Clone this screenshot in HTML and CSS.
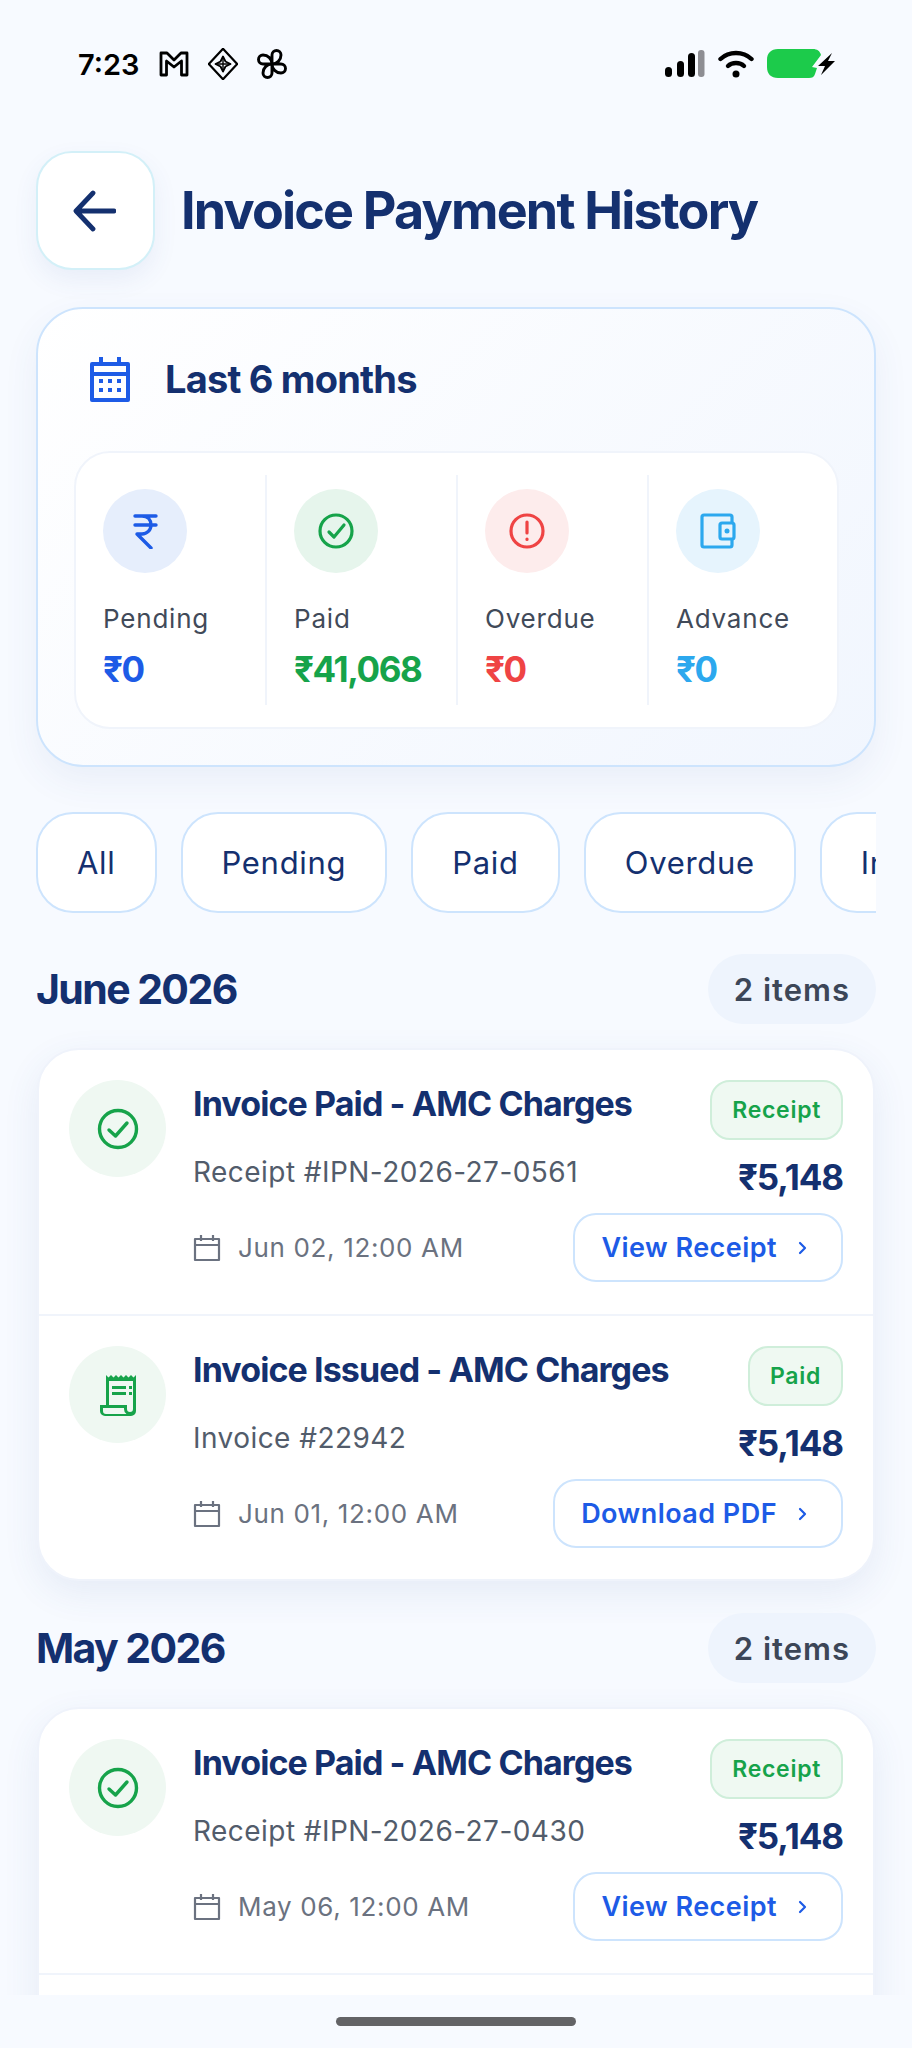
FILE: index.html
```html
<!DOCTYPE html>
<html lang="en">
<head>
<meta charset="utf-8">
<title>Invoice Payment History</title>
<link rel="stylesheet" href="styles.css">
</head>
<body>
<div class="page">
  <div class="scroll">
    <div class="status">
      <div class="status-left">
        <span class="time">7:23</span>
        <svg class="si" viewBox="0 0 30 32" fill="none" stroke="#000" stroke-width="2.800" stroke-linejoin="round"><path d="M2 5h6l7 7 7-7h6v22h-5.500V13L15 19l-7.500-6v14H2z"/></svg>
        <svg class="si" viewBox="0 0 30 32" fill="none" stroke="#000" stroke-width="2.200" stroke-linejoin="round"><path d="M15 .8 29.200 16 15 31.200 .8 16z"/><path d="M15 8.500l2.500 5 5 2.500-5 2.500-2.500 5-2.500-5-5-2.500 5-2.500z" stroke-width="1.800"/><path d="M15 8.500v15M7.500 16h15" stroke-width="1.400"/></svg>
        <svg class="si" viewBox="0 0 30 32" fill="none" stroke="#000" stroke-width="2.900" stroke-linejoin="round"><path d="M15 16V7a4.500 4.500 0 0 1 9 0c0 5-4 9-9 9ZM15 16h9a4.500 4.500 0 0 1 0 9c-5 0-9-4-9-9ZM15 16v9a4.500 4.500 0 0 1-9 0c0-5 4-9 9-9ZM15 16H6a4.500 4.500 0 0 1 0-9c5 0 9 4 9 9Z"/></svg>
      </div>
      <div class="status-right">
        <svg class="signal" viewBox="0 0 40 28"><rect x="0" y="17" width="7" height="10" rx="3.500" fill="#000"/><rect x="12" y="11" width="7" height="16" rx="3.500" fill="#000"/><rect x="23" y="3" width="7" height="24" rx="3.500" fill="#000"/><rect x="33" y="0" width="6.500" height="27" rx="3" fill="#8e8e93"/></svg>
        <svg class="wifi" viewBox="0 0 36 28" fill="none" stroke="#000" stroke-width="4.400" stroke-linecap="round"><path d="M2.500 9C11 1 25 1 33.500 9"/><path d="M10 16C14 12 22 12 26 16"/><circle cx="18" cy="24" r="3.500" fill="#000" stroke="none"/></svg>
        <svg class="batt" viewBox="0 0 68 30"><path d="M11 0h35c4 0 7 2 8 6L45 18l5 1-2 6c-1 3-3 4-6 4H11C4 29 0 25 0 18V11C0 4 4 0 11 0Z" fill="#1ccb4b"/><path d="M65 4 51 17h7l-4 9 14-14h-7l4-8Z" fill="#000"/></svg>
      </div>
    </div>

    <main class="content">
      <header class="header">
        <button class="back" type="button" aria-label="Back">
          <svg viewBox="0 0 44 44" fill="none" stroke="#14306f" stroke-width="4.800" stroke-linecap="round" stroke-linejoin="round"><path d="M21 4 4 22l17 18M5 22h37"/></svg>
        </button>
        <h1 class="title">Invoice Payment History</h1>
      </header>

      <section class="summary">
        <div class="range">
          <svg class="range-icon" viewBox="0 0 44 46"><path fill="none" stroke="#1d5be6" stroke-width="4" stroke-linejoin="round" d="M4 8h36v36H4zM4 18h36"/><path fill="#1d5be6" d="M11 1h4v9h-4zM29 1h4v9h-4zM11 23h4v4h-4zM20 23h4v4h-4zM29 23h4v4h-4zM11 32h4v4h-4zM20 32h4v4h-4zM29 32h4v4h-4z"/></svg>
          <span class="range-label">Last 6 months</span>
        </div>
        <div class="stats">
          <div class="stat">
            <div class="disc disc-blue"><svg viewBox="0 0 32 36" fill="none" stroke="#1d5be6" stroke-width="3.400" stroke-linecap="round" stroke-linejoin="round"><path d="M6 3h21M6 12h21M13 3c6 0 9 4 9 9s-4 9-9 9H8l14 14"/></svg></div>
            <div class="stat-label">Pending</div>
            <div class="stat-value v-blue">₹0</div>
          </div>
          <div class="stat">
            <div class="disc disc-green"><svg viewBox="0 0 36 36" fill="none" stroke="#16a34a" stroke-width="3.200" stroke-linecap="round" stroke-linejoin="round"><circle cx="18" cy="18" r="16"/><path d="m11 19 5 5 10-12"/></svg></div>
            <div class="stat-label">Paid</div>
            <div class="stat-value v-green">₹41,068</div>
          </div>
          <div class="stat">
            <div class="disc disc-red"><svg viewBox="0 0 36 36" fill="none" stroke="#ef4444" stroke-width="3.200" stroke-linecap="round"><circle cx="18" cy="18" r="16"/><path d="M18 9v11M18 26v.5"/></svg></div>
            <div class="stat-label">Overdue</div>
            <div class="stat-value v-red">₹0</div>
          </div>
          <div class="stat">
            <div class="disc disc-sky"><svg viewBox="0 0 36 36" fill="none" stroke="#2ca8ee" stroke-width="3.200" stroke-linejoin="round"><path d="M32 11V4a2 2 0 0 0-2-2H4a2 2 0 0 0-2 2v28a2 2 0 0 0 2 2h26a2 2 0 0 0 2-2v-7"/><rect x="20" y="10" width="14" height="16" rx="2"/><circle cx="27" cy="18" r="2.500" fill="#2ca8ee" stroke="none"/></svg></div>
            <div class="stat-label">Advance</div>
            <div class="stat-value v-sky">₹0</div>
          </div>
        </div>
      </section>

      <nav class="filters">
        <span class="chip">All</span>
        <span class="chip">Pending</span>
        <span class="chip">Paid</span>
        <span class="chip">Overdue</span>
        <span class="chip">Invoices</span>
      </nav>

      <section class="month">
        <div class="month-head"><h2 class="month-name">June 2026</h2><span class="count">2 items</span></div>
        <div class="card">
          <article class="row">
            <div class="row-disc"><svg class="ic-check" viewBox="0 0 42 42" fill="none" stroke="#16a34a" stroke-width="3.400" stroke-linecap="round" stroke-linejoin="round"><circle cx="21" cy="21" r="18.500"/><path d="m12 22 6.500 6L30 15"/></svg></div>
            <div class="row-main">
              <div class="line line-top"><h3 class="row-title">Invoice Paid - AMC Charges</h3><span class="badge">Receipt</span></div>
              <div class="line line-mid"><p class="row-sub">Receipt #IPN-2026-27-0561</p><span class="amount">₹5,148</span></div>
              <div class="line line-bot">
                <div class="row-date"><svg viewBox="0 0 28 28" fill="none" stroke="#6b7280" stroke-width="2.200" stroke-linejoin="round"><path d="M2 5h24v21H2zM2 11h24M8 1v6M20 1v6"/></svg><span>Jun 02, 12:00 AM</span></div>
                <button class="action" type="button">View Receipt<svg viewBox="0 0 12 16" fill="none" stroke="#1d5be6" stroke-width="2.200" stroke-linecap="round" stroke-linejoin="round"><path d="m4 3 5 5-5 5"/></svg></button>
              </div>
            </div>
          </article>
          <article class="row">
            <div class="row-disc"><svg class="ic-receipt" viewBox="0 0 38 42" fill="#16a34a"><path d="M7 1l2.500 2.500L12 1l2.500 2.500L17 1l2.500 2.500L22 1l2.500 2.500L27 1l2.500 2.500L32 1l2.500 2.500L37 1v36a5 5 0 0 1-5 5H6a5 5 0 0 1-5-5v-6h6zm3 6v24h18v4a3 3 0 0 0 3 3 3 3 0 0 0 3-3V7zM4 34v3a3 3 0 0 0 3 3h20.500a6 6 0 0 1-2.500-5v-1zM13 12h14v3H13zM30 12h3v3h-3zM13 18h14v3H13zM30 18h3v3h-3z" fill-rule="evenodd"/></svg></div>
            <div class="row-main">
              <div class="line line-top"><h3 class="row-title">Invoice Issued - AMC Charges</h3><span class="badge">Paid</span></div>
              <div class="line line-mid"><p class="row-sub">Invoice #22942</p><span class="amount">₹5,148</span></div>
              <div class="line line-bot">
                <div class="row-date"><svg viewBox="0 0 28 28" fill="none" stroke="#6b7280" stroke-width="2.200" stroke-linejoin="round"><path d="M2 5h24v21H2zM2 11h24M8 1v6M20 1v6"/></svg><span>Jun 01, 12:00 AM</span></div>
                <button class="action" type="button">Download PDF<svg viewBox="0 0 12 16" fill="none" stroke="#1d5be6" stroke-width="2.200" stroke-linecap="round" stroke-linejoin="round"><path d="m4 3 5 5-5 5"/></svg></button>
              </div>
            </div>
          </article>
        </div>
      </section>

      <section class="month">
        <div class="month-head"><h2 class="month-name">May 2026</h2><span class="count">2 items</span></div>
        <div class="card">
          <article class="row">
            <div class="row-disc"><svg class="ic-check" viewBox="0 0 42 42" fill="none" stroke="#16a34a" stroke-width="3.400" stroke-linecap="round" stroke-linejoin="round"><circle cx="21" cy="21" r="18.500"/><path d="m12 22 6.500 6L30 15"/></svg></div>
            <div class="row-main">
              <div class="line line-top"><h3 class="row-title">Invoice Paid - AMC Charges</h3><span class="badge">Receipt</span></div>
              <div class="line line-mid"><p class="row-sub">Receipt #IPN-2026-27-0430</p><span class="amount">₹5,148</span></div>
              <div class="line line-bot">
                <div class="row-date"><svg viewBox="0 0 28 28" fill="none" stroke="#6b7280" stroke-width="2.200" stroke-linejoin="round"><path d="M2 5h24v21H2zM2 11h24M8 1v6M20 1v6"/></svg><span>May 06, 12:00 AM</span></div>
                <button class="action" type="button">View Receipt<svg viewBox="0 0 12 16" fill="none" stroke="#1d5be6" stroke-width="2.200" stroke-linecap="round" stroke-linejoin="round"><path d="m4 3 5 5-5 5"/></svg></button>
              </div>
            </div>
          </article>
          <article class="row"></article>
        </div>
      </section>
    </main>
  </div>
  <footer class="home"><span class="home-bar"></span></footer>
</div>
</body>
</html>
```
FILE: styles.css
```css
* { box-sizing: border-box; }
html, body { margin: 0; padding: 0; }
body {
  background: #f7faff;
  font-family: Inter, "Noto Sans", sans-serif;
  color: #14306f;
}
.page {
  width: 912px;
  height: 2048px;
  display: flex;
  flex-direction: column;
  overflow: hidden;
  background: #f7faff;
}
.scroll { flex: 1; min-height: 0; overflow: hidden; }
.status {
  height: 151px;
  padding: 48px 77px 71px 78px;
  display: flex;
  justify-content: space-between;
  align-items: center;
}
.status-left, .status-right { display: flex; align-items: center; }
.time { font-size: 29px; font-weight: 600; color: #000; margin-right: 19px; }
.si { width: 30px; height: 32px; margin-right: 19px; }
.signal { width: 40px; height: 28px; margin-right: 13px; }
.wifi { width: 36px; height: 28px; margin-right: 13px; }
.batt { width: 68px; height: 30px; }

.content { padding: 0 36px; }
.header { display: flex; align-items: center; gap: 26px; height: 119px; }
.back {
  width: 119px;
  height: 119px;
  padding: 0;
  border: 2px solid #d3f0f8;
  border-radius: 36px;
  background: #fff;
  box-shadow: 0 10px 24px rgba(60, 90, 160, .08);
  display: flex;
  align-items: center;
  justify-content: center;
}
.back svg { width: 44px; height: 44px; margin-right: 4px; }
.title { margin: 0; font-size: 52px; font-weight: 700; letter-spacing: -1.8px; color: #14306f; }

.summary {
  margin-top: 37px;
  height: 460px;
  padding: 34px 37px 37px;
  border: 2px solid #cde4fd;
  border-radius: 47px;
  background: linear-gradient(135deg, #ffffff 0%, #f1f6fe 100%);
  box-shadow: 0 14px 36px rgba(60, 90, 160, .07);
}
.range { display: flex; align-items: center; height: 72px; padding-left: 13px; gap: 33px; margin-bottom: 36px; }
.range-icon { width: 44px; height: 46px; }
.range-label { font-size: 38px; font-weight: 700; letter-spacing: -.8px; color: #14306f; }
.stats {
  display: grid;
  grid-template-columns: 191px 191px 191px 1fr;
  height: 278px;
  padding: 22px 0;
  margin: 0 -2px 0 -1px;
  border: 2px solid #f0f4fb;
  border-radius: 36px;
  background: #fff;
}
.stat { padding: 14px 0 0 27px; border-right: 2px solid #f0f4fb; }
.stat:last-child { border-right: 0; }
.disc {
  width: 84px;
  height: 84px;
  border-radius: 50%;
  display: flex;
  align-items: center;
  justify-content: center;
}
.disc svg { width: 36px; height: 36px; }
.disc-blue { background: #e6eefc; }
.disc-green { background: #e6f5ec; }
.disc-red { background: #fdecec; }
.disc-sky { background: #e6f4fd; }
.stat-label { margin-top: 29px; font-size: 26px; line-height: 34px; letter-spacing: .8px; color: #414a59; }
.stat-value { margin-top: 13px; font-size: 35px; line-height: 40px; font-weight: 700; letter-spacing: -1.4px; }
.v-blue { color: #1d5be6; }
.v-green { color: #16a34a; }
.v-red { color: #ef4444; }
.v-sky { color: #2ca8ee; }

.filters { display: flex; gap: 24px; margin-top: 45px; overflow: hidden; }
.chip {
  flex-shrink: 0;
  height: 101px;
  padding: 0 39px;
  border: 2px solid #cde4fd;
  border-radius: 37px;
  background: #fff;
  display: flex;
  align-items: center;
  font-size: 31px;
  letter-spacing: .7px;
  color: #14306f;
}

.month { margin-top: 32px; }
.filters + .month { margin-top: 41px; }
.month-head { display: flex; justify-content: space-between; align-items: center; height: 70px; margin-bottom: 24px; }
.month-name { margin: 0; font-size: 41px; font-weight: 700; letter-spacing: -1.6px; color: #14306f; }
.count {
  height: 70px;
  padding: 0 26px;
  border-radius: 35px;
  background: #eef4fd;
  display: flex;
  align-items: center;
  font-size: 31px;
  font-weight: 600;
  letter-spacing: 1px;
  color: #3c4657;
}
.card {
  margin: 0 1px;
  border: 2px solid #eff3fb;
  border-radius: 42px;
  background: #fff;
  box-shadow: 0 12px 36px rgba(60, 90, 160, .09);
}
.row {
  height: 266px;
  padding: 30px 30px 0;
  display: flex;
  gap: 27px;
  border-bottom: 2px solid #f0f4fb;
}
.row:last-child { border-bottom: 0; height: 263px; }
.row-disc {
  flex-shrink: 0;
  width: 97px;
  height: 97px;
  border-radius: 50%;
  background: #eff8f2;
  display: flex;
  align-items: center;
  justify-content: center;
}
.ic-check { width: 42px; height: 42px; }
.ic-receipt { width: 38px; height: 42px; }
.row-main { flex: 1; min-width: 0; }
.line { display: flex; justify-content: space-between; }
.line-top { height: 60px; }
.line-mid { height: 44px; margin-top: 15px; }
.line-bot { height: 69px; margin-top: 14px; align-items: center; }
.row-title { margin: 0; font-size: 34px; line-height: 48px; font-weight: 700; letter-spacing: -.9px; color: #14306f; white-space: nowrap; }
.row-sub { margin: 0; font-size: 28px; line-height: 34px; letter-spacing: .45px; color: #525c6b; white-space: nowrap; }
.row-date { display: flex; align-items: center; gap: 17px; font-size: 26px; letter-spacing: .65px; color: #6b7280; white-space: nowrap; }
.row-date svg { width: 28px; height: 28px; }
.badge {
  height: 60px;
  padding: 0 20px;
  border: 2px solid #cfeeda;
  border-radius: 20px;
  background: #eff9f2;
  display: flex;
  align-items: center;
  font-size: 23px;
  font-weight: 600;
  letter-spacing: .7px;
  color: #16a34a;
}
.amount { font-size: 35px; line-height: 44px; font-weight: 700; letter-spacing: -1.1px; color: #14306f; white-space: nowrap; }
.action {
  height: 69px;
  padding: 0 33px 0 26px;
  border: 2px solid #cde4fd;
  border-radius: 23px;
  background: #fff;
  display: flex;
  align-items: center;
  gap: 19px;
  font-family: inherit;
  font-size: 27px;
  font-weight: 600;
  letter-spacing: .45px;
  white-space: nowrap;
  color: #1d5be6;
}
.action svg { width: 12px; height: 16px; }
.home {
  flex-shrink: 0;
  height: 53px;
  background: #f7faff;
  display: flex;
  justify-content: center;
  padding-top: 22px;
}
.home-bar { width: 240px; height: 9px; border-radius: 5px; background: #636366; }
```
